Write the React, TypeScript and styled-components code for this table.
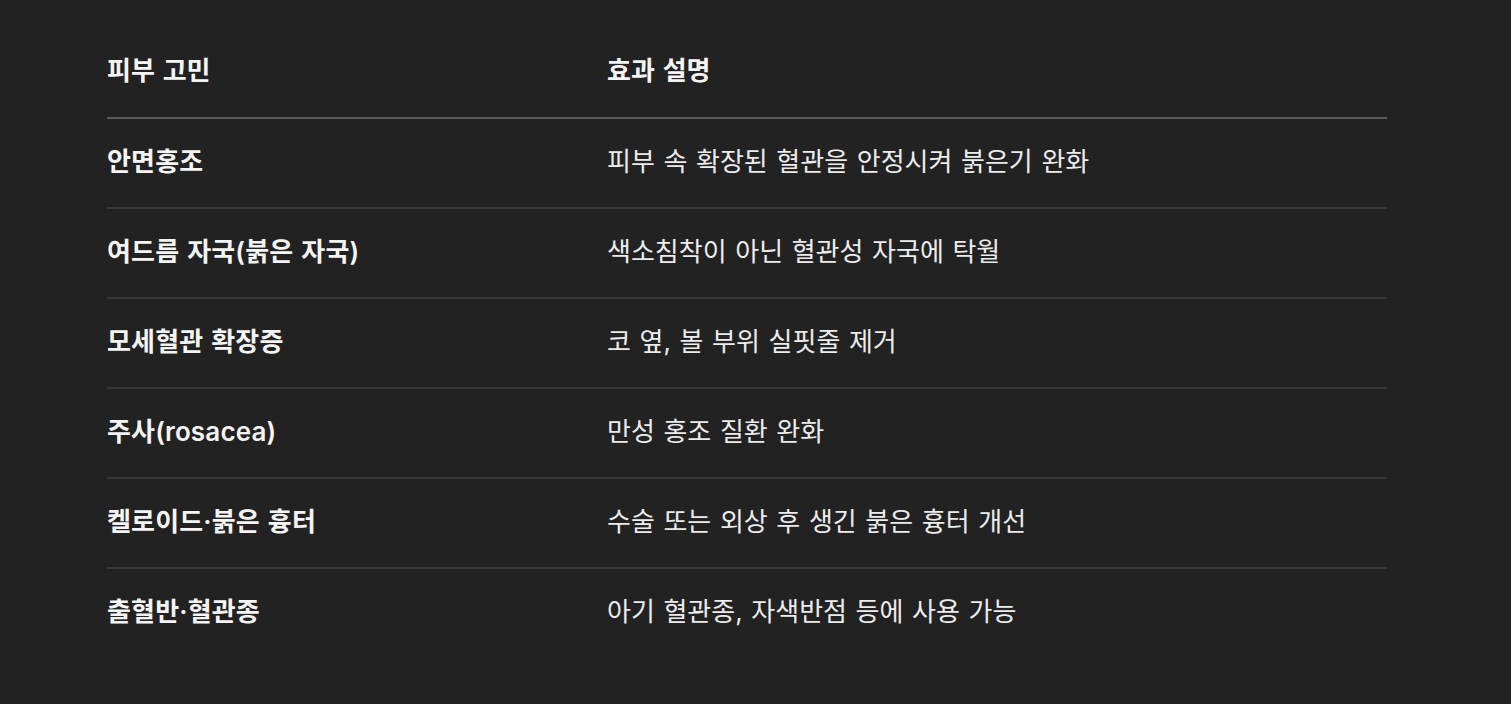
import React from 'react';
import styled, { createGlobalStyle } from 'styled-components';

const GlobalStyle = createGlobalStyle`
  html, body {
    margin: 0;
    padding: 0;
    background: #222222;
  }
  body {
    font-family: Inter, 'Noto Sans CJK KR', 'Noto Sans', sans-serif;
    color: #f2f2f2;
  }
`;

const Page = styled.div`
  min-height: 704px;
  padding: 28px 124px 0 107px;
  box-sizing: border-box;
`;

const Table = styled.table`
  width: 1280px;
  border-collapse: collapse;
  table-layout: fixed;
`;

const HeadCell = styled.th<{ $w?: number }>`
  box-sizing: border-box;
  width: ${(p) => (p.$w ? `${p.$w}px` : 'auto')};
  height: 90px;
  padding: 0 0 8px;
  text-align: left;
  font-size: 26px;
  font-weight: 600;
  word-spacing: 1.3px;
  color: #f4f4f4;
  border-bottom: 2px solid #5a5a5a;
  vertical-align: middle;
`;

const Row = styled.tr`
  & + & td {
    border-top: 2px solid #383838;
  }
`;

const Cell = styled.td<{ $strong?: boolean }>`
  box-sizing: border-box;
  height: 90px;
  padding: 0 0 8px;
  font-size: 26px;
  font-weight: ${(p) => (p.$strong ? 600 : 400)};
  letter-spacing: ${(p) => (p.$strong ? '0.15px' : '0')};
  word-spacing: 1.3px;
  color: ${(p) => (p.$strong ? '#f4f4f4' : '#ececec')};
  vertical-align: middle;
`;

const rows = [
  ['안면홍조', '피부 속 확장된 혈관을 안정시켜 붉은기 완화'],
  ['여드름 자국(붉은 자국)', '색소침착이 아닌 혈관성 자국에 탁월'],
  ['모세혈관 확장증', '코 옆, 볼 부위 실핏줄 제거'],
  ['주사(rosacea)', '만성 홍조 질환 완화'],
  ['켈로이드·붉은 흉터', '수술 또는 외상 후 생긴 붉은 흉터 개선'],
  ['출혈반·혈관종', '아기 혈관종, 자색반점 등에 사용 가능'],
];

const App: React.FC = () => {
  return (
    <>
      <GlobalStyle />
      <Page>
        <Table>
          <thead>
            <tr>
              <HeadCell $w={500}>피부 고민</HeadCell>
              <HeadCell>효과 설명</HeadCell>
            </tr>
          </thead>
          <tbody>
            {rows.map(([concern, effect]) => (
              <Row key={concern}>
                <Cell $strong>{concern}</Cell>
                <Cell>{effect}</Cell>
              </Row>
            ))}
          </tbody>
        </Table>
      </Page>
    </>
  );
};

export default App;
